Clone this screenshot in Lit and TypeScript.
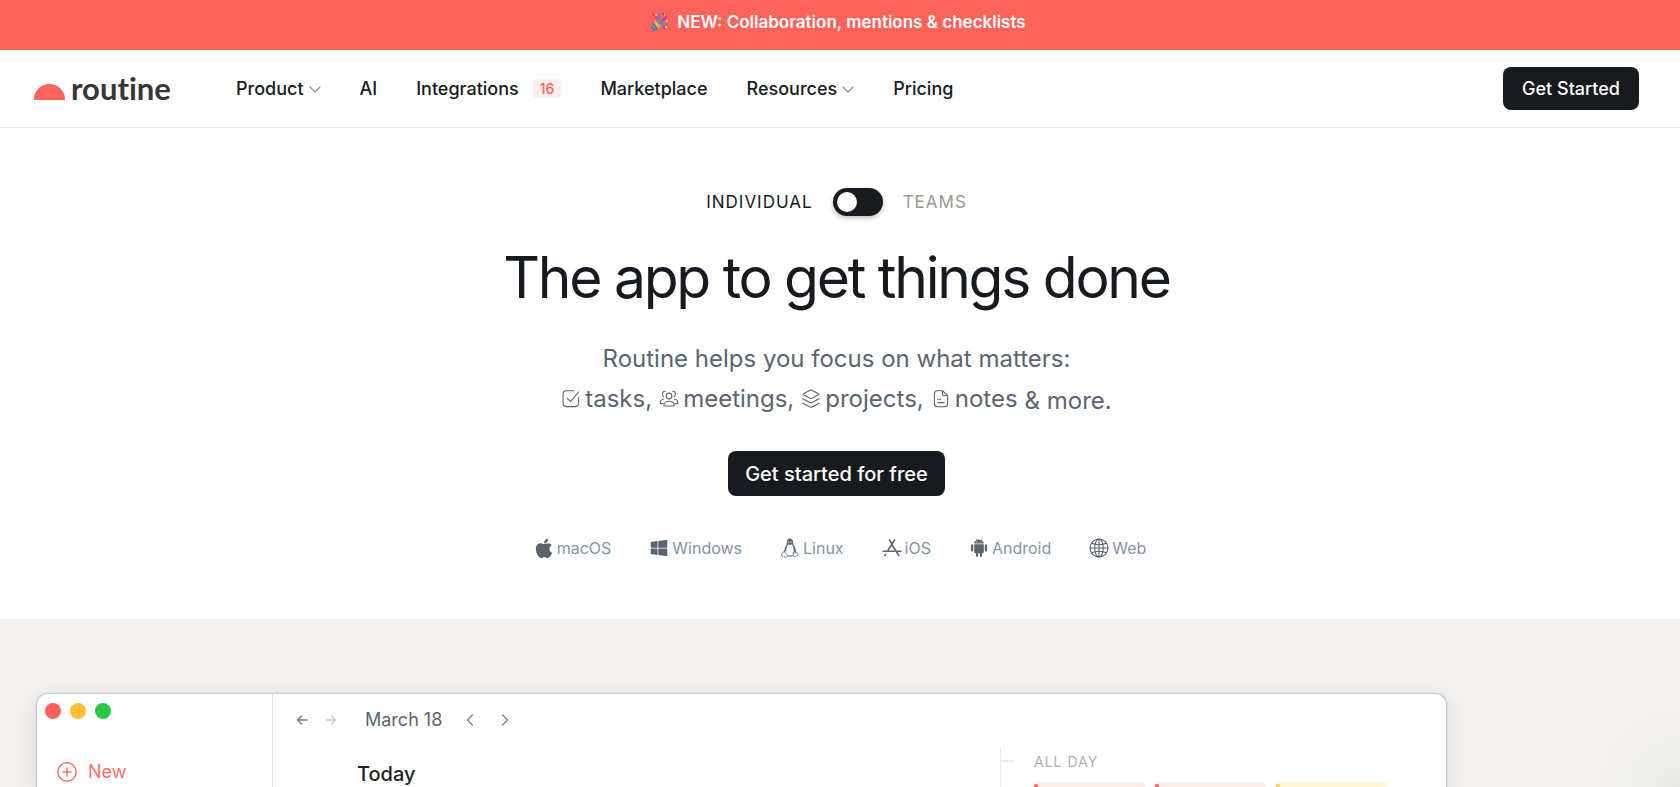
import { LitElement, html, css, svg } from "lit";
import { customElement, state } from "lit/decorators.js";

const chevron = (d: string, size = 12, w = 1.2) => html`<svg class="ico" width=${size} height=${size} viewBox="0 0 12 12" fill="none" stroke="currentColor" stroke-width=${w} stroke-linecap="round" stroke-linejoin="round" aria-hidden="true"><path d=${d} /></svg>`;

const line = (body: unknown) => html`<svg class="ico" width="20" height="20" viewBox="0 0 20 20" fill="none" stroke="currentColor" stroke-width="1.1" stroke-linecap="round" stroke-linejoin="round" aria-hidden="true">${body}</svg>`;

const topics = [
  { text: "tasks,", icon: line(svg`<path d="M13 1.7H5.6Q2 1.7 2 5.300V14Q2 17.600 5.600 17.600H14Q17.600 17.600 17.600 14V8.500M6.300 9.300 9.600 12.600 17.600 3"/>`) },
  { text: "meetings,", icon: line(svg`<circle cx="10" cy="7" r="2.900"/><path d="M4.800 16.500C4.800 10.900 15.200 10.900 15.200 16.500Q15.200 17 14.700 17H5.300Q4.800 17 4.800 16.500ZM6.200 2.300C3.600 1.800 2.400 6 4.800 7.700M13.800 2.300C16.400 1.800 17.600 6 15.200 7.700M4.400 10.200C2 10.300 1 12 1.200 14.600H3.600M15.600 10.200C18 10.300 19 12 18.800 14.600H16.400"/>`) },
  { text: "projects,", icon: line(svg`<path d="M9 1.200Q10 .700 11 1.200L17 4.400Q18.400 5.200 17 6L11 9.200Q10 9.700 9 9.200L3 6Q1.600 5.200 3 4.400ZM1.800 9.800 9 13.500Q10 14 11 13.500L18.200 9.800M1.800 14.200 9 18Q10 18.500 11 18L18.200 14.200"/>`) },
  { text: "notes", icon: line(svg`<path d="M11.500 1.700H6.400Q3.400 1.700 3.400 4.700V14.700Q3.400 17.700 6.400 17.700H13.600Q16.600 17.700 16.600 14.700V6.700ZM11.500 1.700V5.200Q11.500 6.700 13 6.700H16.600M6.800 10.300H9.600M6.800 13.600H13.200"/>`) },
];

const solid = (viewBox: string, body: unknown) => html`<svg class="ico" width="20" height="20" viewBox=${viewBox} fill="currentColor" aria-hidden="true">${body}</svg>`;

const platforms = [
  { name: "macOS", icon: solid("-28 20 440 460", svg`<path d="M318.700 268.700c-.2-36.700 16.400-64.400 50-84.800-18.800-26.900-47.200-41.700-84.700-44.600-35.500-2.800-74.300 20.700-88.500 20.700-15 0-49.400-19.700-76.400-19.700C63.300 141.200 4 184.800 4 273.500q0 39.300 14.400 81.200c12.800 36.700 59 126.700 107.200 125.200 25.200-.6 43-17.900 75.800-17.900 31.800 0 48.300 17.900 76.400 17.900 48.600-.7 90.400-82.500 102.600-119.300-65.200-30.700-61.700-90-61.700-91.900zm-56.600-164.200c27.300-32.400 24.800-61.900 24-72.500-24.100 1.400-52 16.400-67.900 34.900-17.500 19.800-27.800 44.300-25.600 71.900 26.100 2 49.900-11.400 69.500-34.300z"/>`) },
  { name: "Windows", icon: solid("-48 -16 544 544", svg`<path d="M0 93.700l183.600-25.300v177.400H0V93.700zm0 324.600l183.600 25.300V268.400H0v149.900zm203.800 28L448 480V268.400H203.800v177.900zm0-380.600v180.100H448V32L203.800 65.700z"/>`) },
  { name: "Linux", icon: solid("0 0 20 20", svg`<path fill="none" stroke="currentColor" stroke-width="1" d="M7.400 4.500C7.300 1.900 8 .9 9.700.9S12.600 2 12.600 4.500C12.700 8 15.700 9.600 15.300 14.200M7.400 4.500C7.500 7.500 4.700 9.700 4.700 13.800M7.300 17.700Q10 18.600 12.800 17.700"/><path d="M7.400 4.800V3C7.400 0 12.600 0 12.600 3.200L12.800 7 15.800 12.500 15.400 14.800 13.700 13.500Q13.800 9.500 11.900 6L10 7.200 8.300 6.200Q6.300 9.500 6 13L4.500 14 4.900 11.300 7.200 7.500Z"/><path fill="none" stroke="currentColor" stroke-width=".9" stroke-dasharray="2 .6" d="M4.300 13.600 7.700 17.600Q6.800 19.700 4.800 18.900L1.500 18 2 14.900ZM13.300 14V18.300Q14.400 19.600 15.800 18.400L18.700 16.700 16.700 14Q15 16 13.300 14Z"/><path fill="#fff" d="M8.300 3.400h1v1.300h-1zM10.500 3.400h1v1.300h-1z"/>`) },
  { name: "iOS", icon: html`<svg class="ico" width="20" height="20" viewBox="0 0 20 20" fill="none" stroke="currentColor" stroke-width="1.600" stroke-linecap="round" aria-hidden="true"><path d="M7.600 2 9.800 5.500M12.600 2 5.600 13M1 13.300H12.300M3.500 16.500 2.800 17.600M10.300 7.200 16.800 17.500M15.300 13.300H19"/></svg>` },
  { name: "Android", icon: solid("0 0 20 20", svg`<path d="M5.200 6.300H14.800V13.700Q14.800 15.200 13.300 15.200H13V18Q13 19 12 19T11 18V15.200H9V18Q9 19 8 19T7 18V15.200H6.700Q5.200 15.200 5.200 13.700ZM5.200 5.600C5.300 3.900 6.300 2.800 7.500 2.200L6.600.8 7 .5 8 1.900Q10 1.200 12 1.900L13 .5 13.400.8 12.500 2.200C13.700 2.800 14.700 3.900 14.800 5.600Z"/><rect x="2" y="6.300" width="2.200" height="7.300" rx="1.100"/><rect x="15.800" y="6.300" width="2.200" height="7.300" rx="1.100"/><path fill="#fff" d="M7.500 3.500h.9v.9h-.9zM11.600 3.500h.9v.9h-.9z"/>`) },
  { name: "Web", icon: line(svg`<circle cx="10" cy="10" r="8.900"/><ellipse cx="10" cy="10" rx="4.300" ry="8.900"/><path d="M10 1.100V18.900M1.100 10H18.900M2.700 5.300Q10 8.300 17.300 5.300M2.700 14.700Q10 11.700 17.300 14.700"/>`) },
];

const navItems = [
  { text: "Product", menu: true },
  { text: "AI" },
  { text: "Integrations", badge: "16" },
  { text: "Marketplace" },
  { text: "Resources", menu: true },
  { text: "Pricing" },
];

@customElement("app-root")
export class AppRoot extends LitElement {
  @state() private teams = false;

  static styles = css`
    :host {
      display: flex;
      flex-direction: column;
      min-height: 100vh;
      background: #fff;
      color: #171a1f;
      font-family: Inter, "Liberation Sans", sans-serif;
      font-size: 18px;
      --coral: #fd635b;
      --ink: #171a1f;
      --slate: #5b6472;
    }
    * { box-sizing: border-box; }
    a { color: inherit; text-decoration: none; }
    button { font: inherit; border: 0; padding: 0; background: none; color: inherit; cursor: pointer; }
    .ico { display: block; flex: none; }
    .banner {
      display: flex;
      justify-content: center;
      align-items: center;
      gap: 9px;
      height: 50px;
      padding: 0 4px 6px 0;
      background: var(--coral);
      color: #fff;
      font-size: 17px;
      font-weight: 600;
    }
    .header {
      display: flex;
      align-items: center;
      height: 78px;
      padding: 0 41px 0 34px;
      border-bottom: 1px solid #e3e4e6;
    }
    .logo {
      display: flex;
      align-items: center;
      gap: 6px;
      width: 202px;
      color: #373737;
      font: 700 31px/40px Lato, sans-serif;
      font-variant-ligatures: none;
    }
    .sun {
      width: 31px;
      height: 16px;
      margin-top: 7px;
      border-radius: 16px 16px 0 0;
      background: var(--coral);
    }
    .wordmark { padding-bottom: 2px; }
    .nav { display: flex; align-items: center; gap: 39px; flex: 1; font-weight: 500; }
    .nav-item { display: flex; align-items: center; gap: 5px; }
    .nav-item .ico { color: #8d939c; }
    .badge {
      margin-left: 9px;
      padding: 0 7px;
      border-radius: 4px;
      background: #fceeed;
      color: var(--coral);
      font-size: 14px;
      line-height: 19px;
    }
    .btn {
      border-radius: 8px;
      background: var(--ink);
      color: #fff;
      font-weight: 500;
    }
    .start { height: 43px; padding: 0 19px; }
    .hero {
      display: flex;
      flex-direction: column;
      align-items: center;
      padding: 60px 7px 60px 0;
    }
    .audience { display: flex; align-items: center; gap: 20px; font-size: 17px; line-height: 20px; letter-spacing: 1px; }
    .teams { color: #9b9791; }
    .switch {
      appearance: none;
      display: flex;
      align-items: center;
      width: 50px;
      height: 28px;
      margin: 0;
      padding: 0 4px;
      border-radius: 14px;
      background: var(--ink);
      box-shadow: 0 2px 5px rgb(0 0 0 / 25%);
      cursor: pointer;
    }
    .switch::before { content: ""; width: 20px; height: 20px; border-radius: 50%; background: #fff; }
    .switch:checked { justify-content: flex-end; }
    h1 {
      margin: 26px 0 0;
      font-size: 57px;
      font-weight: 400;
      line-height: 72px;
      letter-spacing: -0.04em;
    }
    .lead { margin: 25px 0 0; color: var(--slate); font-size: 24px; line-height: 40px; text-align: center; }
    .topics { display: flex; justify-content: center; align-items: flex-start; gap: 7px; }
    .topic { display: flex; align-items: center; gap: 4px; }
    .more { padding-top: 2px; }
    .cta { height: 45px; margin-top: 30px; padding: 0 17px; font-size: 20px; }
    .platforms { display: flex; gap: 38px; margin: 41px 0 0; padding: 0 0 0 7px; list-style: none; font-size: 16px; line-height: 22px; color: #8593a5; }
    .platform { display: flex; align-items: center; gap: 3px; }
    .platform .ico { color: var(--slate); }
    .showcase {
      flex: 1;
      display: flex;
      padding: 74px 0 0 36px;
      overflow: hidden;
      background: radial-gradient(circle at 100% 100%, #e6e6e5 0, #ededec 28px, #f1f0ef 55px, #f3f2f0 88px);
    }
    .window {
      display: flex;
      width: 86%;
      max-width: 1411px;
      border: 1px solid #cbcbcb;
      border-bottom: 0;
      border-radius: 12px 12px 0 0;
      background: #fff;
      box-shadow: 0 0 0 1px rgb(0 0 0 / 4%), 0 6px 22px rgb(0 0 0 / 10%);
    }
    .side { width: 236px; padding: 9px 8px 0; border-right: 1px solid #e5e5e5; }
    .lights { display: flex; gap: 9px; }
    .light { width: 16px; height: 16px; border-radius: 50%; }
    .red { background: #ff6059; }
    .amber { background: #ffc02f; }
    .green { background: #29ca41; }
    .new { display: flex; align-items: center; gap: 11px; margin: 42px 0 0 12px; color: #fc6f67; line-height: 22px; }
    .main { flex: 1; padding: 14px 0 0 23px; }
    .toolbar { display: flex; align-items: center; color: #747d89; line-height: 24px; }
    .tool + .tool { margin-left: 17px; }
    .faint { color: #c9cacc; }
    .month { margin: 0 22px 0 28px; color: var(--slate); }
    .month + .tool + .tool { margin-left: 23px; }
    .today { margin: 28px 0 0 61px; color: #202224; font-size: 20px; font-weight: 500; line-height: 28px; }
    .calendar { display: flex; align-items: stretch; width: 446px; padding-top: 53px; }
    .rail { width: 34px; border-left: 1px solid #ececec; }
    .tick { width: 13px; height: 2px; margin-top: 13px; background: #ececec; }
    .allday { flex: 1; padding-right: 59px; }
    .label { margin-top: 4px; color: #b0b0b0; font-size: 14px; line-height: 22px; letter-spacing: 1px; }
    .events { display: flex; gap: 10px; margin-top: 9px; }
    .event { flex: 1; height: 6px; padding-top: 2px; border-radius: 4px 4px 0 0; background: #fceceb; }
    .mark { width: 4px; height: 4px; border-radius: 2px 2px 0 0; background: var(--coral); }
    .event.yellow { background: #fef5d5; }
    .event.yellow .mark { background: #f3cf60; }
  `;

  render() {
    return html`
      <a class="banner" href="#">
        <svg class="ico" width="18" height="18" viewBox="0 0 18 18" fill="none" stroke-width="2" aria-hidden="true">
          <path d="M2 17 5 7 11 14Z" fill="#e7ad3d"/>
          <path d="M2 10Q6 13 7 17M1 14Q4 15 5 18" stroke="#4478bd"/>
          <path d="M6 7Q9 8 10 1M9 11Q10 8 13 12T17 11M10 9 15 7" stroke="#3c91d8"/>
          <path d="M12 1h2M15 4h2M12 7 16 5M3 2h2M7 5 5 4M13 15h2" stroke="#e52f92"/>
          <path d="M5 2h2M14 2h1M16 8h2M15 14h2M7 10v2" stroke="#efc341"/>
        </svg>
        <span>NEW: Collaboration, mentions &amp; checklists</span>
      </a>
      <header class="header">
        <a class="logo" href="#"><span class="sun"></span><span class="wordmark">routine</span></a>
        <nav class="nav" aria-label="Main">
          ${navItems.map((n) => html`<a class="nav-item" href="#">${n.text}${n.menu ? chevron("M1 4 6 9 11 4") : ""}${n.badge ? html`<span class="badge">${n.badge}</span>` : ""}</a>`)}
        </nav>
        <button class="btn start">Get Started</button>
      </header>
      <section class="hero">
        <div class="audience">
          <label for="audience">INDIVIDUAL</label>
          <input class="switch" id="audience" type="checkbox" role="switch" .checked=${this.teams} @change=${(e: Event) => (this.teams = (e.target as HTMLInputElement).checked)} />
          <label class="teams" for="audience">TEAMS</label>
        </div>
        <h1>The app to get things done</h1>
        <div class="lead">
          <div>Routine helps you focus on what matters:</div>
          <div class="topics">
            ${topics.map((t) => html`<span class="topic">${t.icon}<span>${t.text}</span></span>`)}
            <span class="more">&amp; more.</span>
          </div>
        </div>
        <button class="btn cta">Get started for free</button>
        <ul class="platforms">
          ${platforms.map((p) => html`<li class="platform">${p.icon}<span>${p.name}</span></li>`)}
        </ul>
      </section>
      <section class="showcase">
        <div class="window">
          <aside class="side">
            <div class="lights"><span class="light red"></span><span class="light amber"></span><span class="light green"></span></div>
            <button class="new">
              <svg class="ico" width="20" height="20" viewBox="0 0 20 20" fill="none" stroke="currentColor" stroke-width="1.500" stroke-linecap="round" aria-hidden="true"><circle cx="10" cy="10" r="9.200"/><path d="M10 6V14M6 10H14"/></svg>
              New
            </button>
          </aside>
          <div class="main">
            <div class="toolbar">
              <button class="tool" aria-label="Back">${chevron("M11 6H1.500M5.500 2 1.500 6 5.500 10", 12, 1.5)}</button>
              <button class="tool faint" aria-label="Forward">${chevron("M1 6H10.500M6.500 2 10.500 6 6.500 10", 12, 1.5)}</button>
              <span class="month">March 18</span>
              <button class="tool" aria-label="Previous day">${chevron("M8.500 1 3.500 6 8.500 11", 12, 1.2)}</button>
              <button class="tool" aria-label="Next day">${chevron("M3.500 1 8.500 6 3.500 11", 12, 1.2)}</button>
            </div>
            <h2 class="today">Today</h2>
          </div>
          <div class="calendar">
            <div class="rail"><div class="tick"></div></div>
            <div class="allday">
              <div class="label">ALL DAY</div>
              <div class="events">
                <div class="event"><div class="mark"></div></div>
                <div class="event"><div class="mark"></div></div>
                <div class="event yellow"><div class="mark"></div></div>
              </div>
            </div>
          </div>
        </div>
      </section>
    `;
  }
}
